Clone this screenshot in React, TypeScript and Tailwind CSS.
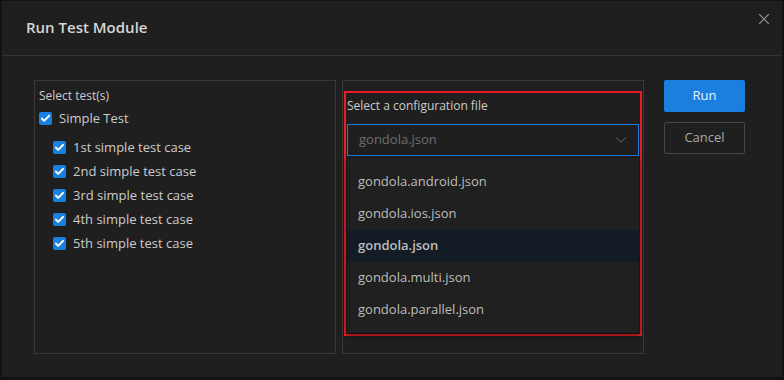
import { Check, ChevronDown, X } from 'lucide-react';

const cases = ['1st simple test case', '2nd simple test case', '3rd simple test case', '4th simple test case', '5th simple test case'];
const configs = ['gondola.android.json', 'gondola.ios.json', 'gondola.json', 'gondola.multi.json', 'gondola.parallel.json'];

function Box() {
  return (
    <span className="w-[13px] h-[13px] rounded-[2px] bg-[#1b7fe0] flex items-center justify-center shrink-0">
      <Check size={11} strokeWidth={4} className="text-white" />
    </span>
  );
}

export default function App() {
  return (
    <div className="w-[784px] h-[380px] bg-[#121212] pl-[2px] pt-[1px] font-['Segoe_UI','Open_Sans',sans-serif]">
      <div className="w-[780px] h-[376px] bg-[#1f1f1f] flex flex-col">
        <div className="h-[55px] border-b border-[#333] flex items-center justify-between pl-[24px] pr-[9px]">
          <span className="text-[15px] font-semibold text-[#d6d6d6] -mt-[1px]">Run Test Module</span>
          <X size={18} strokeWidth={1.5} className="text-[#8f8f8f] -mt-[18px]" />
        </div>
        <div className="flex pl-[32px] pt-[24px] gap-[6px]">
          <div className="w-[302px] h-[274px] border border-[#393939] pl-[4px] pt-[7px] text-[#cccccc]">
            <div className="text-[12px] leading-[16px]">Select test(s)</div>
            <div className="flex items-center gap-[7px] mt-[5px] text-[13px]">
              <Box />
              <span>Simple Test</span>
            </div>
            <div className="pl-[14px] mt-[7px] flex flex-col">
              {cases.map((c) => (
                <div key={c} className="h-[24px] flex items-center gap-[7px] text-[13px]">
                  <Box />
                  <span>{c}</span>
                </div>
              ))}
            </div>
          </div>
          <div className="w-[302px] h-[274px] border border-[#393939] pt-[10px] pl-[1px]">
            <div className="w-[298px] h-[245px] border-2 border-[#ed1c24] px-[1px] pt-[5px]">
              <div className="text-[12px] leading-[16px] text-[#cccccc]">Select a configuration file</div>
              <div className="mt-[10px] h-[32px] border border-[#1b7fe0] flex items-center justify-between pl-[11px] pr-[8px]">
                <span className="text-[13px] text-[#6e6e6e]">gondola.json</span>
                <ChevronDown size={18} strokeWidth={1.1} className="text-[#7a7a7a]" />
              </div>
              <div className="mt-[2px] pt-[8px] pb-[7px] bg-[#202020] shadow-[0_2px_6px_rgba(0,0,0,0.6)] flex flex-col">
                {configs.map((f) => (
                  <div
                    key={f}
                    className={`h-[32px] flex items-center pl-[11px] text-[13px] text-[#bdbdbd] ${f === 'gondola.json' ? 'bg-[#131b24] font-semibold' : ''}`}
                  >
                    {f}
                  </div>
                ))}
              </div>
            </div>
          </div>
          <div className="flex flex-col gap-[10px] ml-[14px]">
            <button className="w-[81px] h-[32px] rounded-[2px] bg-[#1b7fe0] text-[#e8f1fb] text-[13px]">Run</button>
            <button className="w-[81px] h-[32px] rounded-[2px] border border-[#454545] text-[#a8a8a8] text-[13px]">Cancel</button>
          </div>
        </div>
      </div>
    </div>
  );
}
